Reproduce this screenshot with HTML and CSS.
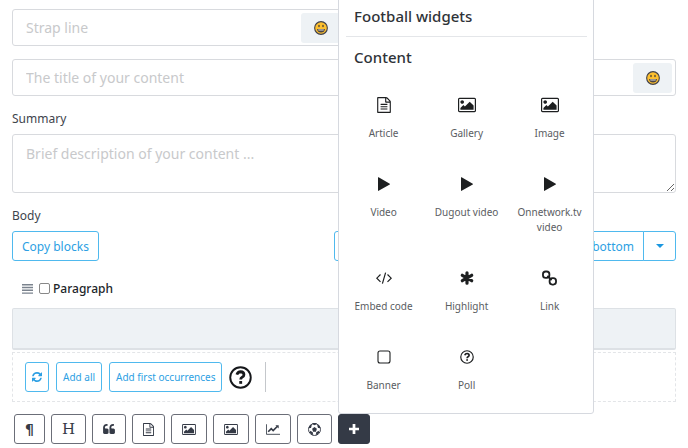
FILE: index.html
```
<!DOCTYPE html>
<html lang="en">
<head>
    <meta charset="utf-8">
    <title>Edit content</title>
    <link rel="stylesheet" href="styles.css">
</head>
<body>
    <svg class="sprite" aria-hidden="true">
        <symbol id="i-smile" viewBox="0 0 28 28">
            <circle cx="14" cy="14" r="12.7" fill="#fdc02f" stroke="#41414b" stroke-width="2.2"/>
            <ellipse cx="10" cy="10" rx="1.4" ry="2.4" fill="#3b3436"/>
            <ellipse cx="18" cy="10" rx="1.4" ry="2.4" fill="#3b3436"/>
            <path d="M6 16h16q-1 7-8 7t-8-7z" fill="#4b4446"/>
            <path d="M8 17h12l-1 2h-10z" fill="#e8e3dc"/>
        </symbol>
        <symbol id="i-image" viewBox="-64 128 1920 1536">
            <path d="M576 576q0 80-56 136t-136 56-136-56-56-136 56-136 136-56 136 56 56 136zm1024 384v448h-1408v-192l320-320 160 160 512-512zm96-704h-1600q-13 0-22.5 9.5t-9.5 22.5v1216q0 13 9.5 22.5t22.5 9.5h1600q13 0 22.5-9.5t9.5-22.5v-1216q0-13-9.5-22.5t-22.5-9.5zm160 32v1216q0 66-47 113t-113 47h-1600q-66 0-113-47t-47-113v-1216q0-66 47-113t113-47h1600q66 0 113 47t47 113z"/>
        </symbol>
        <symbol id="i-file" viewBox="128 0 1536 1792">
            <path d="M1596 380q28 28 48 76t20 88v1152q0 40-28 68t-68 28h-1344q-40 0-68-28t-28-68v-1600q0-40 28-68t68-28h896q40 0 88 20t76 48zm-444-244v376h376q-10-29-22-41l-313-313q-12-12-41-22zm384 1528v-1024h-416q-40 0-68-28t-28-68v-416h-768v1536h1280zm-1024-864q0-14 9-23t23-9h704q14 0 23 9t9 23v64q0 14-9 23t-23 9h-704q-14 0-23-9t-9-23v-64zm736 224q14 0 23 9t9 23v64q0 14-9 23t-23 9h-704q-14 0-23-9t-9-23v-64q0-14 9-23t23-9h704zm0 256q14 0 23 9t9 23v64q0 14-9 23t-23 9h-704q-14 0-23-9t-9-23v-64q0-14 9-23t23-9h704z"/>
        </symbol>
        <symbol id="i-refresh" viewBox="128 128 1536 1536">
            <path d="M1639 1056q0 5-1 7-64 268-268 434.5t-478 166.5q-146 0-282.5-55t-243.5-157l-129 129q-19 19-45 19t-45-19-19-45v-448q0-26 19-45t45-19h448q26 0 45 19t19 45-19 45l-137 137q71 66 161 102t187 36q134 0 250-65t186-179q11-17 53-117 8-23 30-23h192q13 0 22.5 9.5t9.5 22.5zm25-800v448q0 26-19 45t-45 19h-448q-26 0-45-19t-19-45 19-45l138-138q-148-137-349-137-134 0-250 65t-186 179q-11 17-53 117-8 23-30 23h-199q-13 0-22.5-9.5t-9.5-22.5v-7q65-268 270-434.5t480-166.5q146 0 284 55.5t245 156.5l130-129q19-19 45-19t45 19 19 45z"/>
        </symbol>
        <symbol id="i-quote" viewBox="64 128 1664 1408">
            <path d="M832 960v384q0 80-56 136t-136 56h-384q-80 0-136-56t-56-136v-704q0-104 40.5-198.5t109.5-163.5 163.5-109.5 198.5-40.5h64q26 0 45 19t19 45v128q0 26-19 45t-45 19h-64q-106 0-181 75t-75 181v32q0 40 28 68t68 28h224q80 0 136 56t56 136zm896 0v384q0 80-56 136t-136 56h-384q-80 0-136-56t-56-136v-704q0-104 40.5-198.5t109.5-163.5 163.5-109.5 198.5-40.5h64q26 0 45 19t19 45v128q0 26-19 45t-45 19h-64q-106 0-181 75t-75 181v32q0 40 28 68t68 28h224q80 0 136 56t56 136z"/>
        </symbol>
        <symbol id="i-play" viewBox="0 0 12 14">
            <path d="M0 .5v13q0 .6.6.3l11.2-6.4q.4-.3 0-.6l-11.2-6.5q-.6-.3-.6.2z"/>
        </symbol>
        <symbol id="i-code" viewBox="0 0 16 12">
            <path d="M4.5 2.5l-3.7 3.7 3.7 3.7M11.5 2.5l3.7 3.7-3.7 3.7M9.6.6l-3.2 11" fill="none" stroke="currentColor" stroke-width="1.2"/>
        </symbol>
        <symbol id="i-asterisk" viewBox="0 0 14 14">
            <path d="M7 1.8v10.4M2.3 4.3l9.4 5.4M11.7 4.3l-9.4 5.4" fill="none" stroke="currentColor" stroke-width="3.2" stroke-linecap="round"/>
        </symbol>
        <symbol id="i-link" viewBox="0 0 14 14">
            <g fill="none" stroke="currentColor" stroke-width="1.7">
                <rect x=".9" y=".9" width="6" height="6" rx="2.5"/>
                <rect x="7.1" y="7.1" width="6" height="6" rx="2.5"/>
                <path d="M5 5l4 4"/>
            </g>
        </symbol>
        <symbol id="i-square" viewBox="0 0 14 14">
            <rect x="1" y="1" width="12" height="12" rx="2" fill="none" stroke="currentColor" stroke-width="1.1"/>
        </symbol>
        <symbol id="i-question" viewBox="0 0 24 24">
            <circle cx="12" cy="12" r="10.7" fill="none" stroke="currentColor" stroke-width="2"/>
            <path d="M8.2 9q1-3 3.900-3 3.500.2 3.500 3 0 1.500-1.800 2.600-1.600 1-1.600 2.400" fill="none" stroke="currentColor" stroke-width="2.9"/>
            <path d="M10.7 15.7h3v2.9h-3z"/>
        </symbol>
        <symbol id="i-chart" viewBox="0 0 16 12">
            <path d="M.5 0v11.500h15.500" fill="none" stroke="currentColor"/>
            <path d="M2.5 8.600l3.500-3.600 2.200 2.200 4.600-4.600" fill="none" stroke="currentColor" stroke-width="1.9"/>
            <path d="M10.7 1h3.800v3.800z"/>
        </symbol>
        <symbol id="i-ball" viewBox="0 0 24 24">
            <circle cx="12" cy="12" r="11" fill="none" stroke="currentColor" stroke-width="1.8"/>
            <path d="M12 7.600l4.400 3.200-1.700 5.200h-5.400l-1.700-5.200zM7.600 1.700l4.400 2.600 4.400-2.600-1.400-1.500h-6zM1 9l4.500.3 1.600-5-3-1zM23 9l-4.500.3-1.600-5 3-1zM3.200 18l1-3.900 4.600 2.900.7 5.500zM20.800 18l-1-3.900-4.600 2.900-.7 5.500z"/>
        </symbol>
        <symbol id="i-plus" viewBox="0 0 11 11">
            <path d="M4 0h3v4h4v3h-4v4h-3v-4h-4v-3h4z"/>
        </symbol>
        <symbol id="i-bars" viewBox="0 0 11 10">
            <path d="M0 0h11v1.400h-11zM0 2.800h11v1.400h-11zM0 5.600h11v1.400h-11zM0 8.400h11v1.400h-11z"/>
        </symbol>
    </svg>

    <form class="editor">
        <div class="field field-half">
            <input type="text" aria-label="Strap line" placeholder="Strap line">
            <button type="button" class="emoji" aria-label="Emoji"><svg width="14" height="14"><use href="#i-smile"/></svg></button>
        </div>
        <div class="field">
            <input type="text" aria-label="Title" placeholder="The title of your content">
            <button type="button" class="emoji" aria-label="Emoji"><svg width="14" height="14"><use href="#i-smile"/></svg></button>
        </div>

        <label for="summary">Summary</label>
        <textarea id="summary" placeholder="Brief description of your content ..."></textarea>

        <div class="label">Body</div>
        <div class="actions">
            <button type="button" class="btn">Copy blocks</button>
            <div class="btn-group">
                <button type="button" class="btn grow">Paste blocks to bottom</button>
                <button type="button" class="btn" aria-label="More"><span class="caret"></span></button>
            </div>
        </div>

        <div class="block-head">
            <svg class="handle" width="11" height="10"><use href="#i-bars"/></svg>
            <input type="checkbox" id="paragraph">
            <label for="paragraph">Paragraph</label>
        </div>
        <div class="block-body"></div>

        <div class="tags">
            <button type="button" class="btn btn-sm" aria-label="Refresh"><svg width="10" height="10"><use href="#i-refresh"/></svg></button>
            <button type="button" class="btn btn-sm">Add all</button>
            <button type="button" class="btn btn-sm">Add first occurrences</button>
            <svg class="help" width="23" height="23"><use href="#i-question"/></svg>
            <span class="divider"></span>
        </div>

        <div class="toolbar">
            <button type="button" class="tool" aria-label="Paragraph"><span class="pilcrow">¶</span></button>
            <button type="button" class="tool" aria-label="Heading"><span class="heading">H</span></button>
            <button type="button" class="tool" aria-label="Quote"><svg width="12" height="10"><use href="#i-quote"/></svg></button>
            <button type="button" class="tool" aria-label="Article"><svg width="11" height="13"><use href="#i-file"/></svg></button>
            <button type="button" class="tool" aria-label="Gallery"><svg width="14" height="11"><use href="#i-image"/></svg></button>
            <button type="button" class="tool" aria-label="Image"><svg width="14" height="11"><use href="#i-image"/></svg></button>
            <button type="button" class="tool" aria-label="Odds"><svg width="14" height="11"><use href="#i-chart"/></svg></button>
            <button type="button" class="tool" aria-label="Football"><svg width="13" height="13"><use href="#i-ball"/></svg></button>
            <div class="dropdown">
                <button type="button" class="tool active" aria-label="Add block"><svg width="10" height="10"><use href="#i-plus"/></svg></button>
                <div class="menu">
                    <h2>Football widgets</h2>
                    <hr>
                    <h2>Content</h2>
                    <div class="menu-grid">
                        <button type="button" class="item"><svg width="14" height="16"><use href="#i-file"/></svg>Article</button>
                        <button type="button" class="item"><svg width="18" height="14"><use href="#i-image"/></svg>Gallery</button>
                        <button type="button" class="item"><svg width="18" height="14"><use href="#i-image"/></svg>Image</button>
                        <button type="button" class="item"><svg width="12" height="14"><use href="#i-play"/></svg>Video</button>
                        <button type="button" class="item"><svg width="12" height="14"><use href="#i-play"/></svg>Dugout video</button>
                        <button type="button" class="item"><svg width="12" height="14"><use href="#i-play"/></svg>Onnetwork.tv video</button>
                        <button type="button" class="item"><svg width="16" height="12"><use href="#i-code"/></svg>Embed code</button>
                        <button type="button" class="item"><svg width="14" height="14"><use href="#i-asterisk"/></svg>Highlight</button>
                        <button type="button" class="item"><svg width="15" height="15"><use href="#i-link"/></svg>Link</button>
                        <button type="button" class="item"><svg width="14" height="14"><use href="#i-square"/></svg>Banner</button>
                        <button type="button" class="item"><svg width="14" height="14"><use href="#i-question"/></svg>Poll</button>
                    </div>
                </div>
            </div>
        </div>
    </form>
</body>
</html>
```
FILE: styles.css
```
* {
    box-sizing: border-box;
}
body {
    margin: 0;
    background: #fff;
    color: #3e444c;
    font-family: "Noto Sans", "Open Sans", sans-serif;
    font-size: 12px;
    line-height: 16px;
}
button, input, textarea {
    margin: 0;
    font-family: inherit;
}
svg {
    display: block;
    flex: none;
    fill: currentColor;
}
.sprite {
    position: absolute;
    width: 0;
    height: 0;
}
.editor {
    padding: 9px 12px 4px;
}
.field {
    display: flex;
    align-items: center;
    height: 37px;
    margin-bottom: 13px;
    padding-right: 3px;
    border: 1px solid #d8dade;
    border-radius: 3px;
}
.field-half {
    width: 50%;
}
.field input {
    flex: 1;
    min-width: 0;
    padding: 0 13px;
    border: 0;
    outline: 0;
    background: none;
    font-size: 14px;
}
::placeholder {
    color: #c8c9cb;
    opacity: 1;
}
.emoji {
    display: flex;
    align-items: center;
    justify-content: center;
    width: 39px;
    height: 30px;
    padding: 0;
    border: 0;
    border-radius: 3px;
    background: #eef2f5;
}
label, .label {
    display: block;
}
.editor > label {
    margin: 15px 0 7px;
}
textarea {
    display: block;
    width: 100%;
    height: 59px;
    padding: 9px 13px;
    border: 1px solid #d8dade;
    border-radius: 3px;
    font-size: 14px;
    line-height: 20px;
}
.label {
    margin: 15px 0 7px;
}
.actions {
    display: flex;
    justify-content: space-between;
}
.btn {
    height: 30px;
    padding: 0 9px;
    border: 1px solid #4fb9ee;
    border-radius: 3px;
    background: #fff;
    color: #2d9fe3;
    font-size: 12px;
}
.btn-group {
    display: flex;
    width: 50%;
    min-width: 342px;
}
.btn-group .grow {
    flex: 1;
    border-radius: 3px 0 0 3px;
    text-align: right;
}
.btn-group .btn:last-child {
    width: 33px;
    margin-left: -1px;
    border-radius: 0 3px 3px 0;
}
.caret {
    display: block;
    width: 0;
    margin: 0 auto;
    border: 4px solid transparent;
    border-top-color: #1b97e0;
    border-bottom: 0;
}
.block-head {
    display: flex;
    align-items: center;
    height: 47px;
    padding: 8px 10px 0;
}
.handle {
    color: #7b838e;
}
.block-head input {
    width: 11px;
    height: 11px;
    margin: 0 3px 0 6px;
    border: 1px solid #888;
    border-radius: 2px;
    appearance: none;
}
.block-head label {
    color: #212529;
    font-weight: 500;
}
.block-body {
    height: 42px;
    border: 1px solid #dde1e5;
    border-bottom-width: 2px;
    border-radius: 2px;
    background: #eef2f5;
}
.tags {
    display: flex;
    align-items: center;
    height: 50px;
    margin: 2px 0 12px;
    padding: 0 12px;
    border: 1px dashed #e3e5e8;
}
.btn-sm {
    margin-right: 7px;
    padding: 0 6px;
    font-size: 10px;
}
.help {
    color: #16181b;
}
.divider {
    width: 1px;
    height: 30px;
    margin-left: 13px;
    background: #c4c7cb;
}
.toolbar {
    display: flex;
    gap: 6px;
    padding-left: 2px;
}
.tool {
    display: flex;
    align-items: center;
    justify-content: center;
    min-width: 31px;
    height: 30px;
    padding: 0 10px;
    border: 1px solid #6b6e78;
    border-radius: 3px;
    background: #fff;
    color: #343a46;
}
.active {
    border-color: #343a46;
    background: #343a46;
    color: #fff;
}
.pilcrow {
    font: bold 14px "DejaVu Sans", sans-serif;
}
.heading {
    font: 15px "DejaVu Serif", serif;
}
.dropdown {
    position: relative;
}
.menu {
    position: absolute;
    bottom: 100%;
    left: 0;
    width: 256px;
    padding: 8px 2px 3px 3px;
    border: 1px solid #d6d9df;
    border-radius: 3px;
    background: #fff;
}
.menu h2 {
    margin: 0;
    padding: 0 12px;
    color: #2f3338;
    font-size: 15px;
    font-weight: 500;
    line-height: 20px;
}
.menu hr {
    height: 1px;
    margin: 10px 4px;
    border: 0;
    background: #e4e6e9;
}
.menu-grid {
    display: grid;
    grid-template-columns: repeat(3, 1fr);
    margin-top: 12px;
}
.item {
    display: flex;
    flex-direction: column;
    align-items: center;
    gap: 13px;
    padding: 18px 4px 17px;
    border: 0;
    background: none;
    color: #5a5d62;
    font-size: 10px;
    line-height: 15px;
}
.item svg {
    height: 16px;
    color: #1d1f20;
}
```
